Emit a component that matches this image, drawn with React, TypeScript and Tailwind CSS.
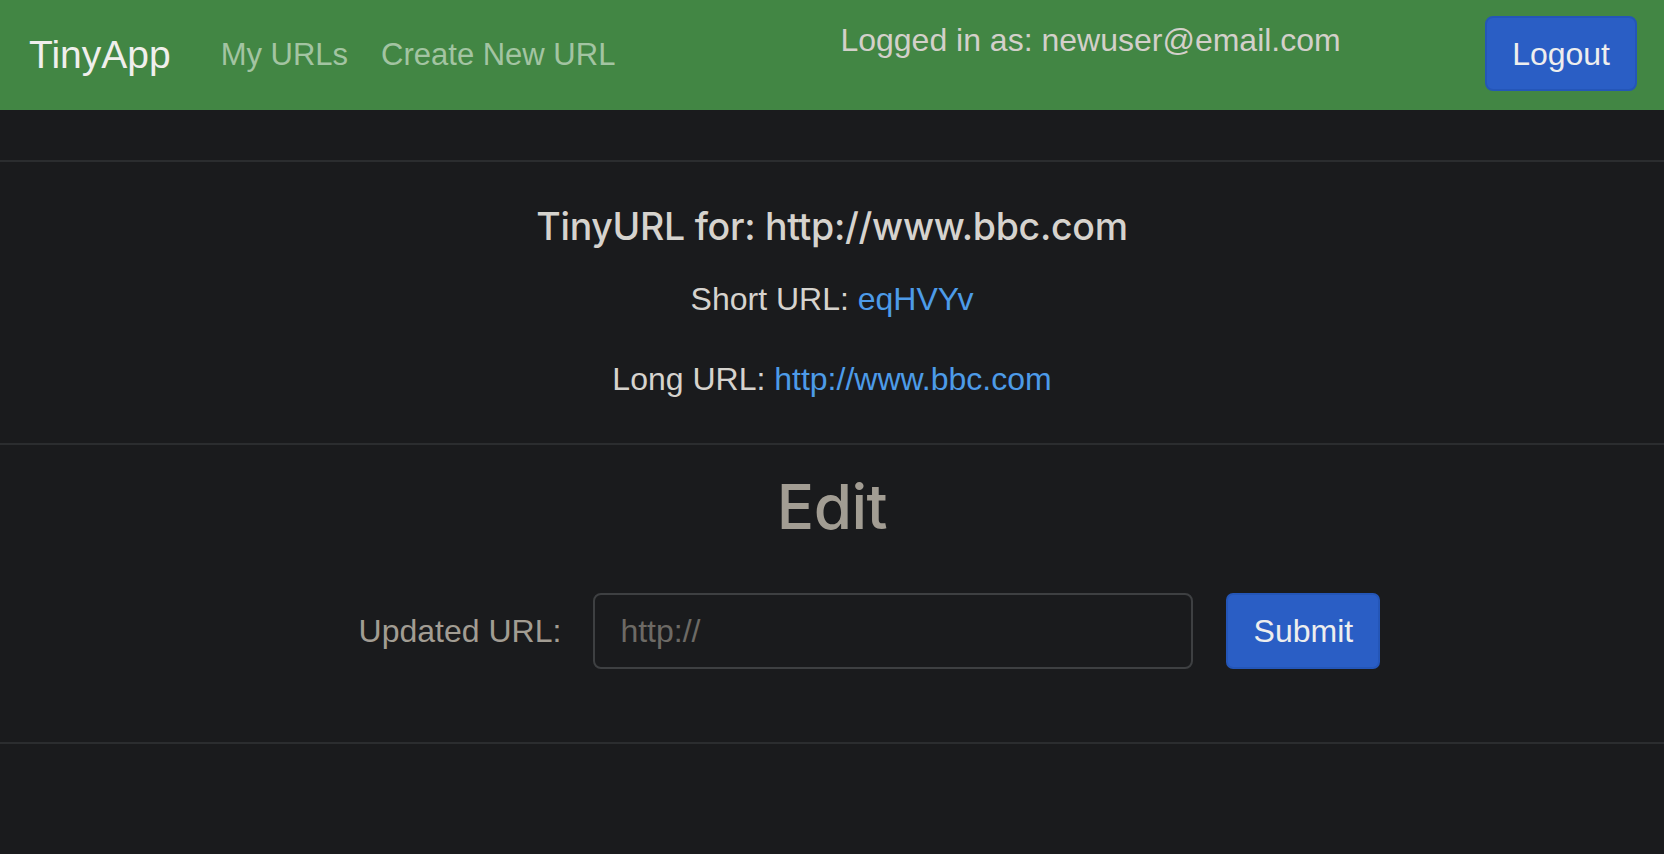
export default function App() {
  return (
    <div className="min-h-screen bg-[#1a1b1d] font-['Liberation_Sans',Arial,sans-serif]">
      {/* Navbar */}
      <nav className="flex h-[110px] items-center bg-[#428644] pl-[29px] pr-[27px]">
        <a className="text-[39px] leading-[1.5] text-[#f0efec]">TinyApp</a>
        <a className="ml-[50px] text-[31px] leading-[1.5] text-[#a3c4a2]">My URLs</a>
        <a className="ml-[33px] text-[31px] leading-[1.5] text-[#a3c4a2]">Create New URL</a>
        <span className="ml-[225px] mt-[20px] self-start text-[32px] leading-[40px] text-[#d3d0ca]">
          Logged in as: newuser@email.com
        </span>
        <button className="ml-auto mt-[16px] h-[75px] self-start rounded-[8px] border-2 border-[#2456b8] bg-[#2a5ec5] px-[25px] text-[32px] text-[#eeeeee]">
          Logout
        </button>
      </nav>

      <div className="h-[50px]" />

      {/* URL info */}
      <section className="flex flex-col items-center border-t-2 border-[#2b2d2f] pt-[41px] pb-[44px] text-center">
        <h3 className="font-['Inter',sans-serif] text-[37.5px] font-medium leading-[48px] tracking-[-0.3px] text-[#d6d3ce]">
          TinyURL for: http://www.bbc.com
        </h3>
        <p className="mt-[28px] text-[32px] leading-[40px] text-[#d6d3ce]">
          Short URL: <a className="text-[#4d9be8]">eqHVYv</a>
        </p>
        <p className="mt-[40px] text-[32px] leading-[40px] text-[#d6d3ce]">
          Long URL: <a className="text-[#4d9be8]">http://www.bbc.com</a>
        </p>
      </section>

      {/* Edit */}
      <section className="flex flex-col items-center border-y-2 border-[#2b2d2f] pt-[23px] pb-[73px]">
        <h1 className="font-['Inter',sans-serif] text-[62px] font-medium leading-[78px] tracking-[-0.5px] text-[#a29d93]">
          Edit
        </h1>
        <form className="mt-[47px] flex w-full items-center justify-center pl-[75px]">
          <label className="text-[32px] leading-[40px] text-[#a29d93]">Updated URL:</label>
          <input
            type="text"
            placeholder="http://"
            className="ml-[32px] h-[76px] w-[600px] rounded-[8px] border-2 border-[#3e4042] bg-[#1a1b1d] px-[25px] text-[32px] text-[#d6d3ce] outline-none placeholder:text-[#6d6a65]"
          />
          <button
            type="button"
            className="ml-[33px] h-[76px] w-[154px] rounded-[7px] border-2 border-[#2456b8] bg-[#2a5ec5] text-[32px] text-[#eeeeee]"
          >
            Submit
          </button>
        </form>
      </section>
    </div>
  );
}
